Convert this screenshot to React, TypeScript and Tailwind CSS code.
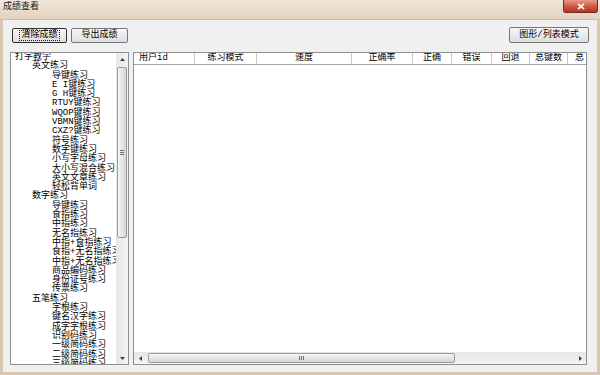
import React from "react";

const FONT = '"Liberation Mono","Noto Sans CJK SC",monospace';

const tree: [number, string][] = [
  [0, "打字教学"],
  [1, "英文练习"],
  [2, "导键练习"],
  [2, "E I键练习"],
  [2, "G H键练习"],
  [2, "RTUY键练习"],
  [2, "WQOP键练习"],
  [2, "VBMN键练习"],
  [2, "CXZ?键练习"],
  [2, "符号练习"],
  [2, "数字键练习"],
  [2, "小写字母练习"],
  [2, "大小写混合练习"],
  [2, "英文文章练习"],
  [2, "轻松背单词"],
  [1, "数字练习"],
  [2, "导键练习"],
  [2, "食指练习"],
  [2, "中指练习"],
  [2, "无名指练习"],
  [2, "中指+食指练习"],
  [2, "食指+无名指练习"],
  [2, "中指+无名指练习"],
  [2, "商品编码练习"],
  [2, "身份证号练习"],
  [2, "传票练习"],
  [1, "五笔练习"],
  [2, "字根练习"],
  [2, "键名汉字练习"],
  [2, "成字字根练习"],
  [2, "识别码练习"],
  [2, "一级简码练习"],
  [2, "二级简码练习"],
  [2, "三级简码练习"],
];

const pads = ["pl-[4px]", "pl-[21px]", "pl-[41px]"];

const cols: { label: string; w: string; left?: boolean }[] = [
  { label: "用户id", w: "w-[61px]", left: true },
  { label: "练习模式", w: "w-[62px]" },
  { label: "速度", w: "w-[95px]" },
  { label: "正确率", w: "w-[61px]" },
  { label: "正确", w: "w-[39px]" },
  { label: "错误", w: "w-[40px]" },
  { label: "回退", w: "w-[38px]" },
  { label: "总键数", w: "w-[38px]" },
  { label: "总...", w: "w-[40px]" },
];

function Arrow({ dir }: { dir: "up" | "down" | "left" | "right" }) {
  const pts =
    dir === "up"
      ? "0,3 2.5,0 5,3"
      : dir === "down"
      ? "0,0 2.5,3 5,0"
      : dir === "left"
      ? "3,0 0,2.5 3,5"
      : "0,0 3,2.5 0,5";
  const vert = dir === "up" || dir === "down";
  return (
    <svg width={vert ? 5 : 3} height={vert ? 3 : 5} viewBox={vert ? "0 0 5 3" : "0 0 3 5"}>
      <polygon points={pts} fill="#404040" />
    </svg>
  );
}

export default function App() {
  return (
    <div
      className="w-[600px] h-[375px] flex flex-col overflow-hidden bg-[#d9c7b0] text-black"
      style={{ fontFamily: FONT }}
    >
      {/* title bar */}
      <div className="h-[19px] shrink-0 flex items-start justify-between bg-gradient-to-b from-[#f1e7da] to-[#e2d2bd]">
        <span className="ml-[3px] mt-[2px] text-[9px] leading-[11px] text-[#1a1a1a]">成绩查看</span>
        <div className="mr-[2px] w-[35px] h-[13px] rounded-b-[3px] border border-t-0 border-[#7a2a20] bg-gradient-to-b from-[#e59a8a] via-[#cf5a44] to-[#b8321f] flex items-center justify-center">
          <svg width="8" height="7" viewBox="0 0 8 7">
            <path d="M1 0.8 L7 6.2 M7 0.8 L1 6.2" stroke="#ffffff" strokeWidth="1.8" />
          </svg>
        </div>
      </div>

      {/* client */}
      <div className="flex-1 min-h-0 mx-[3px] mb-[3px] bg-[#f0f0f0] flex flex-col border-t border-[#cdbba4]">
        {/* toolbar */}
        <div className="mt-[7px] h-[16px] shrink-0 pl-[9px] pr-[8px] flex items-center">
          <div className="w-[55px] h-[15px] border border-[#303030] rounded-[2px] bg-gradient-to-b from-[#f7f7f7] to-[#dedede] flex items-center justify-center">
            <span className="border border-dotted border-[#202020] px-[1px] text-[9px] leading-[9px]">清除成绩</span>
          </div>
          <div className="ml-[4px] w-[57px] h-[15px] border border-[#777777] rounded-[2px] bg-gradient-to-b from-[#f7f7f7] to-[#dedede] flex items-center justify-center text-[9px] leading-[9px]">
            导出成绩
          </div>
          <div className="ml-auto w-[80px] h-[16px] border border-[#777777] rounded-[2px] bg-gradient-to-b from-[#f7f7f7] to-[#dedede] flex items-center justify-center text-[9px] leading-[9px]">
            图形/列表模式
          </div>
        </div>

        {/* content */}
        <div className="flex-1 min-h-0 mt-[9px] pl-[7px] pr-[10px] pb-[7px] flex gap-[4px]">
          {/* tree */}
          <div className="w-[119px] min-h-0 border border-[#8f8f8f] bg-white flex overflow-hidden">
            <div className="flex-1 min-h-0 overflow-hidden">
              {tree.map(([lvl, t], i) => (
                <div
                  key={i}
                  className={`h-[9.3px] leading-[9.3px] text-[9px] whitespace-nowrap ${pads[lvl]}`}
                >
                  {t}
                </div>
              ))}
            </div>
            <div className="w-[12px] shrink-0 flex flex-col bg-gradient-to-r from-[#e6e6e6] to-[#f3f3f3]">
              <div className="h-[12px] shrink-0 flex items-center justify-center">
                <Arrow dir="up" />
              </div>
              <div className="mx-[1px] mt-[2px] h-[171px] shrink-0 rounded-[2px] border border-[#9b9b9b] bg-gradient-to-r from-[#f6f6f6] to-[#d6d6d6] flex flex-col items-center justify-center gap-[1px]">
                <div className="w-[4px] h-px bg-[#6e6e6e]" />
                <div className="w-[4px] h-px bg-[#6e6e6e]" />
                <div className="w-[4px] h-px bg-[#6e6e6e]" />
              </div>
              <div className="flex-1" />
              <div className="h-[12px] shrink-0 flex items-center justify-center">
                <Arrow dir="down" />
              </div>
            </div>
          </div>

          {/* list */}
          <div className="flex-1 min-h-0 border border-[#8f8f8f] bg-white flex flex-col overflow-hidden">
            <div className="h-[12px] flex border-b border-[#a5a5a5] overflow-hidden shrink-0">
              {cols.map((c, i) => (
                <div
                  key={i}
                  className={`${c.w} shrink-0 h-full border-r border-[#c8c8c8] flex items-center text-[9px] leading-[9px] whitespace-nowrap overflow-hidden ${
                    c.left ? "pl-[5px]" : "justify-center"
                  }`}
                >
                  {c.label}
                </div>
              ))}
            </div>
            <div className="flex-1" />
            <div className="h-[12px] flex items-center bg-gradient-to-b from-[#e6e6e6] to-[#f3f3f3] shrink-0">
              <div className="w-[12px] h-full flex items-center justify-center">
                <Arrow dir="left" />
              </div>
              <div className="ml-[2px] w-[307px] h-[10px] rounded-[2px] border border-[#9b9b9b] bg-gradient-to-b from-[#f6f6f6] to-[#d6d6d6] flex items-center justify-center gap-[1px]">
                <div className="w-px h-[4px] bg-[#6e6e6e]" />
                <div className="w-px h-[4px] bg-[#6e6e6e]" />
                <div className="w-px h-[4px] bg-[#6e6e6e]" />
              </div>
              <div className="flex-1" />
              <div className="w-[12px] h-full flex items-center justify-center">
                <Arrow dir="right" />
              </div>
            </div>
          </div>
        </div>
      </div>
    </div>
  );
}
